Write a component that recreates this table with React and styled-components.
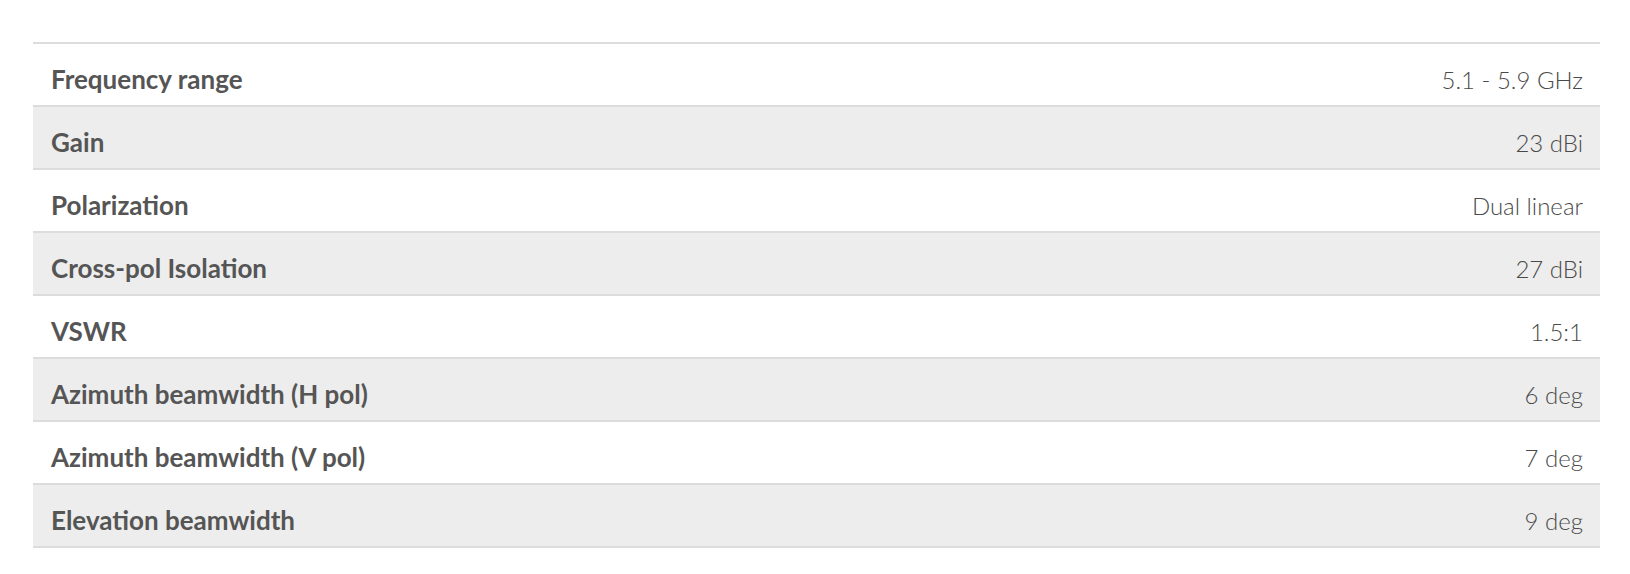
import React from "react"
import styled, { createGlobalStyle } from "styled-components"

// Spec table for the antenna data sheet

const specs = [
  ["Frequency range", "5.1 - 5.9 GHz"],
  ["Gain", "23 dBi"],
  ["Polarization", "Dual linear"],
  ["Cross-pol Isolation", "27 dBi"],
  ["VSWR", "1.5:1"],
  ["Azimuth beamwidth (H pol)", "6 deg"],
  ["Azimuth beamwidth (V pol)", "7 deg"],
  ["Elevation beamwidth", "9 deg"],
]

const GlobalStyle = createGlobalStyle`
  body {
    margin: 0;
    background: #fff;
    font-family: Lato, "Open Sans", sans-serif;
  }
`

const App = () => {
  return (
    <Page>
      <GlobalStyle />
      <Table>
        <tbody>
          {specs.map(([label, value], i) => (
            <Row key={label} striped={i % 2 === 1}>
              <Label>{label}</Label>
              <Value>{value}</Value>
            </Row>
          ))}
        </tbody>
      </Table>
    </Page>
  )
}

const Page = styled.div`
  padding: 42px 30px 0 33px;
`

const Table = styled.table`
  width: 100%;
  border-collapse: collapse;
  border-top: 2px solid #dcdcdc;
  color: #555;
`

const Row = styled.tr.withConfig({ shouldForwardProp: (p) => p !== "striped" })`
  height: 63px;
  background: ${(p) => (p.striped ? "#ededed" : "#fff")};
  border-bottom: 2px solid #dcdcdc;
`

const Label = styled.td`
  padding: 9px 18px 0;
  font-size: 26px;
  font-weight: 700;
  text-align: left;
  vertical-align: middle;
`

const Value = styled.td`
  padding: 9px 17px 0;
  font-size: 24px;
  font-weight: 300;
  color: #4a4a4a;
  text-align: right;
  vertical-align: middle;
`

export default App
